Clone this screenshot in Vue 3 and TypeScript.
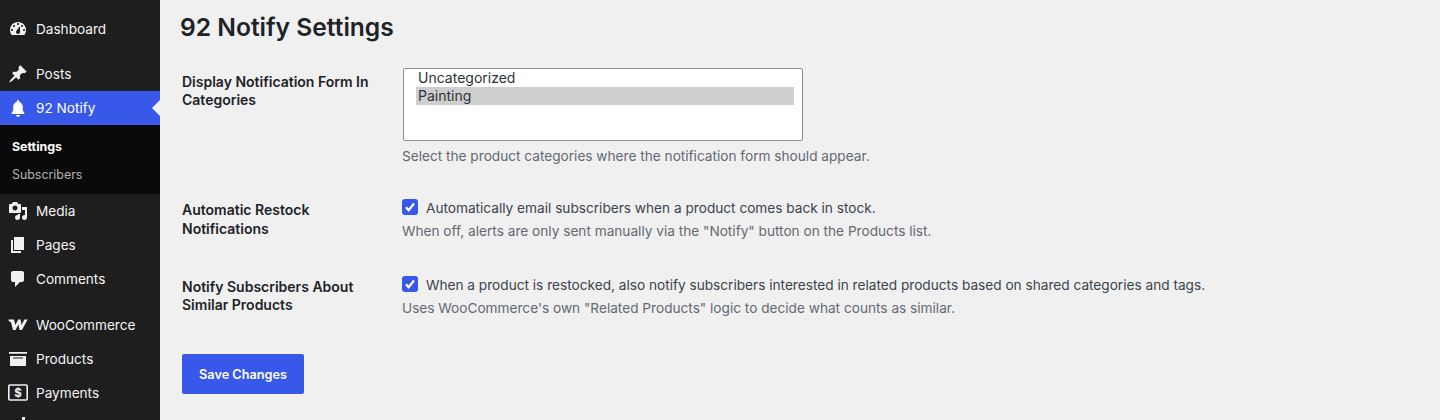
<script setup lang="ts">
interface MenuItem {
  label: string
  icon: string
}
const icons: Record<string, string> = {
  dashboard:
    'M3.76 16h12.48c1.1-1.37 1.76-3.11 1.76-5 0-4.42-3.58-8-8-8s-8 3.58-8 8c0 1.89.66 3.63 1.76 5zM10 4c.55 0 1 .45 1 1s-.45 1-1 1-1-.45-1-1 .45-1 1-1zM6 6c.55 0 1 .45 1 1s-.45 1-1 1-1-.45-1-1 .45-1 1-1zm8 0c.55 0 1 .45 1 1s-.45 1-1 1-1-.45-1-1 .45-1 1-1zm-5.37 5.55L12 7v6c0 1.1-.9 2-2 2s-2-.9-2-2c0-.57.24-1.08.63-1.45zM4 10c.55 0 1 .45 1 1s-.45 1-1 1-1-.45-1-1 .45-1 1-1zm12 0c.55 0 1 .45 1 1s-.45 1-1 1-1-.45-1-1 .45-1 1-1z',
  posts:
    'M10.44 3.02l1.82-1.82 6.36 6.35-1.83 1.82c-1.05-.68-2.48-.57-3.41.36l-.75.75c-.92.93-1.04 2.35-.35 3.41l-1.83 1.82-2.41-2.41-2.8 2.79c-.42.42-3.38 2.71-3.8 2.29s1.86-3.39 2.28-3.81l2.79-2.79L4.1 9.36l1.83-1.82c1.05.69 2.48.57 3.4-.36l.75-.75c.93-.92 1.05-2.35.36-3.41z',
  bell:
    'M10 2.2c-.75 0-1.3.55-1.3 1.3v.5C6.5 4.6 5.2 6.5 5.2 9v3.6L3.6 15v1h12.8v-1l-1.6-2.4V9c0-2.5-1.3-4.4-3.5-5v-.5c0-.75-.55-1.3-1.3-1.3zM8 17c0 1.1.9 1.9 2 1.9s2-.8 2-1.9H8z',
  media:
    'M13 11V4c0-.55-.45-1-1-1h-1.67L9 1H5L3.67 3H2c-.55 0-1 .45-1 1v7c0 .55.45 1 1 1h10c.55 0 1-.45 1-1zM7 4.5c1.38 0 2.5 1.12 2.5 2.5S8.38 9.5 7 9.5 4.5 8.38 4.5 7 5.62 4.5 7 4.5zM14 6h5v10.5c0 1.38-1.12 2.5-2.5 2.5S14 17.88 14 16.5s1.12-2.5 2.5-2.5c.17 0 .34.02.5.05V9h-3V6zm-4 8.05V13h2v3.5c0 1.38-1.12 2.5-2.5 2.5S7 17.88 7 16.5 8.12 14 9.5 14c.17 0 .34.02.5.05z',
  pages: 'M6 15V2h10v13H6zm-1 1h8v2H3V5h2v11z',
  comments:
    'M5 2h9c1.1 0 2 .9 2 2v7c0 1.1-.9 2-2 2h-2l-5 5v-5H5c-1.1 0-2-.9-2-2V4c0-1.1.9-2 2-2z',
  woo:
    'M.2 4.4H6l1.4 5.6 2.8-5.6h2.4l1 5.6 2.7-5.6h3.3L14 15h-2.4l-1.2-5.4L7.6 15H5L3 7.2C2.2 7 .8 6.2.2 4.4z',
  products: 'M1 3h18v1.8H1V3zm1 4h16v10H2V7zm3 1.6v.9h10v-.9H5z',
  analytics: 'M14 0h3v19h-3V0zM8 8h3v11H8V8zM2 12h3v7H2v-7z',
}
const topItems: MenuItem[] = [{ label: 'Dashboard', icon: 'dashboard' }]
const postItems: MenuItem[] = [{ label: 'Posts', icon: 'posts' }]
const contentItems: MenuItem[] = [
  { label: 'Media', icon: 'media' },
  { label: 'Pages', icon: 'pages' },
  { label: 'Comments', icon: 'comments' },
]
const shopItems: MenuItem[] = [
  { label: 'WooCommerce', icon: 'woo' },
  { label: 'Products', icon: 'products' },
]
</script>

<template>
  <div class="page">
    <aside class="sidebar">
      <ul class="menu">
        <li v-for="m in topItems" :key="m.label" class="item">
          <svg class="icon" viewBox="0 0 20 20"><path :d="icons[m.icon]" fill-rule="evenodd" /></svg>
          <span>{{ m.label }}</span>
        </li>
      </ul>
      <ul class="menu group-posts">
        <li v-for="m in postItems" :key="m.label" class="item">
          <svg class="icon" viewBox="0 0 20 20"><path :d="icons[m.icon]" /></svg>
          <span>{{ m.label }}</span>
        </li>
        <li class="item active">
          <svg class="icon" viewBox="0 0 20 20"><path :d="icons.bell" /></svg>
          <span>92 Notify</span>
        </li>
      </ul>
      <ul class="submenu">
        <li class="sub current">Settings</li>
        <li class="sub">Subscribers</li>
      </ul>
      <ul class="menu">
        <li v-for="m in contentItems" :key="m.label" class="item">
          <svg class="icon" viewBox="0 0 20 20"><path :d="icons[m.icon]" /></svg>
          <span>{{ m.label }}</span>
        </li>
      </ul>
      <ul class="menu group-shop">
        <li v-for="m in shopItems" :key="m.label" class="item">
          <svg class="icon" viewBox="0 0 20 20"><path :d="icons[m.icon]" fill-rule="evenodd" /></svg>
          <span>{{ m.label }}</span>
        </li>
        <li class="item">
          <svg class="icon" viewBox="0 0 20 20">
            <rect x="0.8" y="2" width="18.4" height="15" rx="1" class="outline" />
            <text x="10" y="14" text-anchor="middle" class="dollar">$</text>
          </svg>
          <span>Payments</span>
        </li>
        <li class="item">
          <svg class="icon" viewBox="0 0 20 20"><path :d="icons.analytics" /></svg>
        </li>
      </ul>
    </aside>

    <main class="main">
      <h1 class="title">92 Notify Settings</h1>
      <form class="form" @submit.prevent>
        <div class="row row-cats">
          <div class="label">Display Notification Form In Categories</div>
          <div class="field">
            <div class="listbox" role="listbox" aria-multiselectable="true">
              <div class="option" role="option">Uncategorized</div>
              <div class="option selected" role="option" aria-selected="true">Painting</div>
            </div>
            <p class="hint hint-cats">Select the product categories where the notification form should appear.</p>
          </div>
        </div>
        <div class="row row-auto">
          <div class="label">Automatic Restock Notifications</div>
          <div class="field">
            <div class="check-line">
              <span class="box" role="checkbox" aria-checked="true">
                <svg viewBox="0 0 16 16"><path d="M3.9 8.3l2.7 2.9 5.4-6.6" /></svg>
              </span>
              <span>Automatically email subscribers when a product comes back in stock.</span>
            </div>
            <p class="hint">When off, alerts are only sent manually via the "Notify" button on the Products list.</p>
          </div>
        </div>
        <div class="row row-similar">
          <div class="label">Notify Subscribers About Similar Products</div>
          <div class="field">
            <div class="check-line">
              <span class="box" role="checkbox" aria-checked="true">
                <svg viewBox="0 0 16 16"><path d="M3.9 8.3l2.7 2.9 5.4-6.6" /></svg>
              </span>
              <span>When a product is restocked, also notify subscribers interested in related products based on shared categories and tags.</span>
            </div>
            <p class="hint">Uses WooCommerce's own "Related Products" logic to decide what counts as similar.</p>
          </div>
        </div>
        <button class="save" type="submit">Save Changes</button>
      </form>
    </main>
  </div>
</template>

<style>
html,
body {
  margin: 0;
  height: 420px;
  overflow: hidden;
  background: #f0f0f1;
}
</style>

<style scoped>
.page {
  display: flex;
  height: 420px;
  overflow: hidden;
  font-family: Inter, "Liberation Sans", sans-serif;
  font-size: 13px;
  color: #3c434a;
  background: #f0f0f1;
}
.sidebar {
  flex: 0 0 160px;
  width: 160px;
  background: #1e1e1e;
  color: #fff;
  padding-top: 12px;
  box-sizing: border-box;
  overflow: hidden;
}
ul {
  list-style: none;
  margin: 0;
  padding: 0;
}
.group-posts {
  margin-top: 10.6px;
}
.group-shop {
  margin-top: 11.2px;
}
.item {
  position: relative;
  display: flex;
  align-items: center;
  height: 34.2px;
  padding-left: 8px;
  font-size: 13.6px;
  color: #f5f5f5;
}
.icon {
  flex: 0 0 20px;
  width: 20px;
  height: 20px;
  margin-right: 8px;
  fill: #f0f0f1;
  overflow: visible;
}
.outline {
  fill: none;
  stroke: #f0f0f1;
  stroke-width: 1.6;
}
.dollar {
  font-family: Inter, sans-serif;
  font-weight: 700;
  font-size: 11.5px;
  stroke: none;
}
.active {
  background: #3858e9;
  color: #fff;
}
.active .icon {
  fill: #fff;
}
.active::after {
  content: "";
  position: absolute;
  right: 0;
  top: 50%;
  margin-top: -8px;
  border: 8px solid transparent;
  border-right-color: #f0f0f1;
  border-left-width: 0;
}
.submenu {
  height: 68.8px;
  box-sizing: border-box;
  padding-top: 8px;
  background: #0a0a0a;
}
.sub {
  height: 28px;
  line-height: 28px;
  padding-left: 12px;
  font-size: 12.4px;
  color: #b4b4b4;
}
.current {
  font-weight: 700;
  color: #fff;
}
.main {
  flex: 1;
  min-width: 0;
  padding-left: 22px;
}
.title {
  margin: 0 0 0 -2px;
  padding-top: 11px;
  font-size: 24.6px;
  line-height: 33px;
  font-weight: 600;
  color: #1d2327;
}
.form {
  margin: 0;
}
.row {
  display: flex;
}
.row-cats {
  margin-top: 24px;
  height: 130px;
}
.row-auto {
  height: 77px;
}
.row-similar {
  height: 79px;
}
.label {
  flex: 0 0 220px;
  box-sizing: border-box;
  width: 220px;
  padding: 3px 20px 0 0;
  font-size: 14px;
  font-weight: 600;
  line-height: 18.5px;
  color: #1d2327;
}
.row-cats .label {
  padding-top: 5px;
  line-height: 18px;
}
.row-similar .label {
  line-height: 18px;
}
.field {
  flex: 1;
  min-width: 0;
}
.listbox {
  box-sizing: border-box;
  width: 400px;
  height: 73px;
  margin-left: 1px;
  padding: 0 8px 0 12px;
  border: 1px solid #8c8f94;
  border-radius: 2px;
  background: #fff;
  font-size: 14px;
  color: #2c3338;
}
.option {
  height: 18px;
  line-height: 18px;
  padding-left: 2px;
}
.selected {
  background: #cecece;
}
.hint {
  margin: 0;
  font-size: 13.65px;
  line-height: 18px;
  color: #646970;
}
.hint-cats {
  margin-top: 6px;
}
.check-line {
  display: flex;
  align-items: flex-start;
  gap: 8px;
  height: 18px;
  margin-bottom: 6px;
  font-size: 13.65px;
  line-height: 20px;
  color: #3c434a;
}
.box {
  flex: 0 0 16px;
  width: 16px;
  height: 16px;
  margin-top: 1px;
  border-radius: 3px;
  background: #3858e9;
}
.box svg {
  display: block;
  width: 16px;
  height: 16px;
}
.box path {
  fill: none;
  stroke: #fff;
  stroke-width: 2.3;
}
.save {
  display: block;
  width: 122px;
  height: 40px;
  padding: 0;
  border: 0;
  border-radius: 2px;
  background: #3858e9;
  color: #fff;
  font-family: inherit;
  font-size: 12.7px;
  font-weight: 600;
}
</style>
